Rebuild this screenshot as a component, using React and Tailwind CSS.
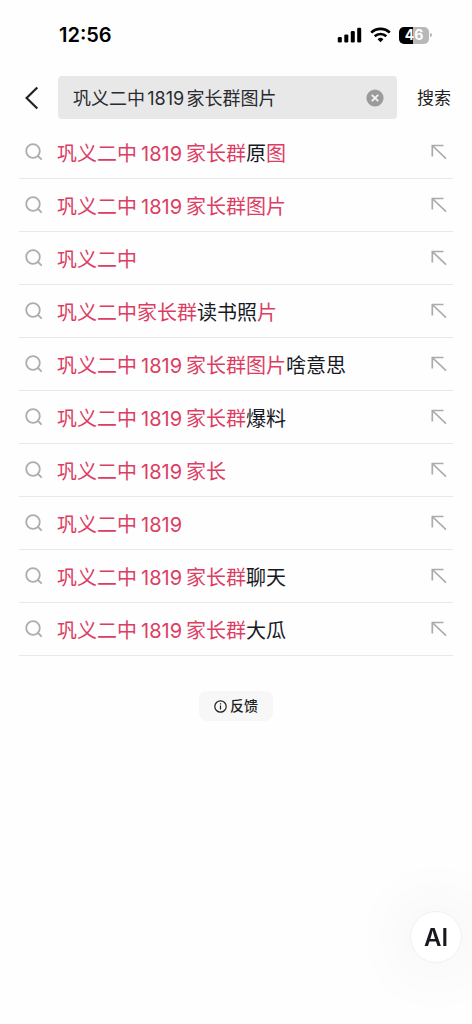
import { useState } from "react";

const suggestions = [
  [["巩义二中", 1], ["1819", 1], ["家长群", 1], ["原", 0], ["图", 1]],
  [["巩义二中", 1], ["1819", 1], ["家长群图片", 1]],
  [["巩义二中", 1]],
  [["巩义二中家长群", 1], ["读书照", 0], ["片", 1]],
  [["巩义二中", 1], ["1819", 1], ["家长群图片", 1], ["啥意思", 0]],
  [["巩义二中", 1], ["1819", 1], ["家长群", 1], ["爆料", 0]],
  [["巩义二中", 1], ["1819", 1], ["家长", 1]],
  [["巩义二中", 1], ["1819", 1]],
  [["巩义二中", 1], ["1819", 1], ["家长群", 1], ["聊天", 0]],
  [["巩义二中", 1], ["1819", 1], ["家长群", 1], ["大瓜", 0]],
];

function StatusBar() {
  return (
    <div className="flex h-[70px] items-center justify-between pr-10 pl-[59px] text-black">
      <span className="text-xl font-semibold">12:56</span>
      <div className="flex items-center gap-2">
        <svg width="25" height="16" viewBox="0 0 25 16" fill="currentColor" aria-hidden="true">
          <rect x="0.8" y="10" width="4" height="5.5" rx="1.2" />
          <rect x="7.3" y="7.4" width="4" height="8.1" rx="1.2" />
          <rect x="13.8" y="4" width="4" height="11.5" rx="1.2" />
          <rect x="20.2" y="0.7" width="4" height="14.8" rx="1.2" />
        </svg>
        <svg width="21" height="16" viewBox="0 0 21 16" fill="none" stroke="currentColor" strokeWidth="2.6" aria-hidden="true">
          <path d="M1.2 5.7a13.2 13.2 0 0 1 18.6 0" />
          <path d="M4.7 9.3a8.3 8.3 0 0 1 11.6 0" />
          <path d="M10.5 15.2l-2.9-3a4.2 4.2 0 0 1 5.8 0z" fill="currentColor" stroke="none" />
        </svg>
        <div className="flex items-center gap-px">
          <div className="flex h-[17px] w-[30px] items-center justify-center rounded-[5px] bg-linear-to-r from-black from-46% to-[#b8b8b8] to-46% text-sm font-bold text-white">
            46
          </div>
          <span className="h-1 w-0.5 rounded-r-full bg-[#b8b8b8]" />
        </div>
      </div>
    </div>
  );
}

function SearchIcon() {
  return (
    <svg className="shrink-0" width="18" height="18" viewBox="0 0 18 18" fill="none" stroke="#adadad" strokeWidth="1.8" strokeLinecap="round" aria-hidden="true">
      <circle cx="8" cy="8" r="6.8" />
      <path d="M13 13l3.2 3.2" />
    </svg>
  );
}

function FillIcon() {
  return (
    <svg width="16" height="16" viewBox="0 0 16 16" fill="none" stroke="#ababab" strokeWidth="1.7" aria-hidden="true">
      <path d="M1.3 12.5V1.5h11.2M1.3 1.5l13.7 13.2" />
    </svg>
  );
}

function Suggestion({ parts, onFill }) {
  return (
    <li className="flex h-[53px] items-center border-b border-[#e9e9e9] px-1.5">
      <a href="#results" className="flex flex-1 items-center gap-[14px] text-xl whitespace-nowrap">
        <SearchIcon />
        <span className="pt-[3px]">
          {parts.map(([text, hit], i) => (
            <span
              key={i}
              className={`${hit ? "text-[#dc3d63]" : "text-[#17191f]"} ${text === "1819" ? "mx-1" : ""}`}
            >
              {text}
            </span>
          ))}
        </span>
      </a>
      <button type="button" aria-label="填入搜索框" onClick={onFill}>
        <FillIcon />
      </button>
    </li>
  );
}

export default function App() {
  const [query, setQuery] = useState("巩义二中1819家长群图片");
  return (
    <div className="min-h-screen bg-[#fefefe] font-['Inter','Noto_Sans_CJK_SC',sans-serif]">
      <StatusBar />
      <form className="flex items-center pt-1.5 pr-[21px] pl-6" onSubmit={(e) => e.preventDefault()}>
        <button type="button" aria-label="返回" className="w-[34px] shrink-0">
          <svg width="15" height="24" viewBox="0 0 15 24" fill="none" stroke="#222" strokeWidth="2.2" aria-hidden="true">
            <path d="M13.3 1.5L2.6 12l10.7 10.5" />
          </svg>
        </button>
        <div className="flex h-[43px] min-w-0 flex-1 items-center rounded-sm bg-[#e8e8e8] pr-[13px] pl-[15px]">
          <input
            aria-label="搜索内容"
            className="min-w-0 flex-1 bg-transparent pt-0.5 text-lg text-[#292b31] outline-none [text-autospace:normal]"
            value={query}
            onChange={(e) => setQuery(e.target.value)}
          />
          <button type="button" aria-label="清空" onClick={() => setQuery("")}>
            <svg width="18" height="18" viewBox="0 0 18 18" aria-hidden="true">
              <circle cx="9" cy="9" r="8.6" fill="#9b9b9b" />
              <path d="M5.8 5.8l6.4 6.4M12.2 5.8l-6.4 6.4" stroke="#f2f2f2" strokeWidth="1.9" />
            </svg>
          </button>
        </div>
        <button type="submit" className="ml-5 shrink-0 pt-0.5 text-[17px] text-[#222]">搜索</button>
      </form>
      <ul className="mt-[7px] px-[19px]">
        {suggestions.map((parts, i) => (
          <Suggestion key={i} parts={parts} onFill={() => setQuery(parts.map((p) => p[0]).join(""))} />
        ))}
      </ul>
      <div className="mt-[35px] flex justify-center">
        <button type="button" className="flex h-[30px] items-center gap-[3px] rounded-lg bg-[#f7f7f7] px-[15px] text-sm font-medium text-[#1d1f24]">
          <svg width="13" height="13" viewBox="0 0 13 13" fill="none" stroke="currentColor" strokeWidth="1.2" aria-hidden="true">
            <circle cx="6.5" cy="6.5" r="5.7" />
            <path d="M6.5 5.6v4M6.5 3.2v1.3" />
          </svg>
          反馈
        </button>
      </div>
      <button
        type="button"
        className="fixed right-2.5 bottom-[61px] flex size-[52px] items-center justify-center rounded-full border border-[#efefef] bg-white pt-0.5 text-2xl font-semibold text-[#17191f] shadow-[0_0_70px_rgba(0,0,0,0.09)]"
      >
        AI
      </button>
    </div>
  );
}
